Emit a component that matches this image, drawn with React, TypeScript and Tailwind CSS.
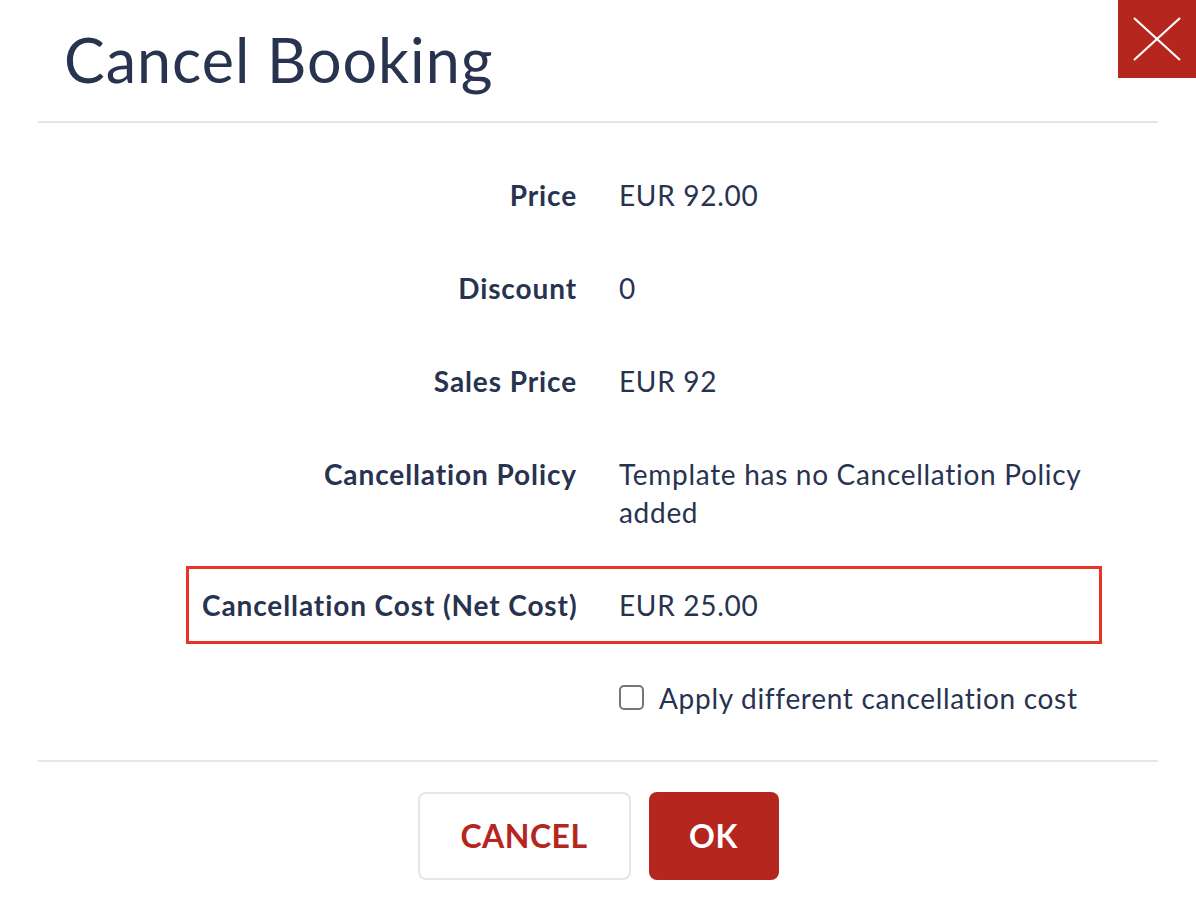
import { useState } from 'react';

const rows = [
    { label: 'Price', value: 'EUR 92.00' },
    { label: 'Discount', value: '0' },
    { label: 'Sales Price', value: 'EUR 92' },
    { label: 'Cancellation Policy', value: 'Template has no Cancellation Policy added' },
];

export default function App() {
    const [applyDifferent, setApplyDifferent] = useState(false);

    return (
        <div className="relative min-h-screen bg-white text-[#283350]" style={{ fontFamily: 'Lato, "Open Sans", sans-serif' }}>
            {/* Close button */}
            <button className="absolute right-0 top-0 flex h-[78px] w-[78px] items-center justify-center bg-[#b5261e]">
                <svg width="48" height="44" viewBox="0 0 48 44" fill="none" stroke="white" strokeWidth="2.2">
                    <line x1="1" y1="1" x2="47" y2="43" />
                    <line x1="47" y1="1" x2="1" y2="43" />
                </svg>
            </button>

            {/* Header */}
            <div className="px-[38px]">
                <h1 className="pl-[26px] pt-[24px] pb-[26px] text-[61px] leading-[71px] font-normal tracking-[1px]">Cancel Booking</h1>
                <div className="h-[2px] bg-[#e6e6e6]"></div>
            </div>

            {/* Body */}
            <div className="pt-[25px] pb-[16px] text-[28px] leading-[38px] tracking-[0.7px]">
                {rows.map((row) => (
                    <div key={row.label} className="ml-[186px] mr-[94px] flex border-[3px] border-transparent px-[13px] py-[24.5px]">
                        <div className="w-[375px] flex-none text-right font-bold tracking-[0.9px]">{row.label}</div>
                        <div className="ml-[42px] w-[475px] flex-none">{row.value}</div>
                    </div>
                ))}

                {/* Highlighted row */}
                <div className="py-[7.5px]">
                    <div className="ml-[186px] mr-[94px] flex border-[3px] border-[#e53528] px-[13px] py-[17px]">
                        <div className="w-[375px] flex-none whitespace-nowrap text-right font-bold tracking-[0.9px]">Cancellation Cost (Net Cost)</div>
                        <div className="ml-[42px] flex-1">EUR 25.00</div>
                    </div>
                </div>

                {/* Checkbox row */}
                <div className="ml-[619px] flex items-center gap-[15px] py-[27.5px]">
                    <button
                        onClick={() => setApplyDifferent(!applyDifferent)}
                        className={`h-[25px] w-[25px] flex-none rounded-[5px] border-2 border-[#767676] ${applyDifferent ? 'bg-[#b5261e]' : 'bg-white'}`}
                    ></button>
                    <span>Apply different cancellation cost</span>
                </div>
            </div>

            {/* Footer */}
            <div className="px-[38px]">
                <div className="h-[2px] bg-[#e6e6e6]"></div>
                <div className="flex justify-center gap-[18px] pt-[30px]">
                    <button className="h-[88px] w-[213px] rounded-[8px] border-2 border-[#e6e6e6] bg-white text-[32px] font-bold tracking-[0.5px] text-[#b5261e]">
                        CANCEL
                    </button>
                    <button className="h-[88px] w-[130px] rounded-[8px] bg-[#b5261e] text-[32px] font-bold tracking-[0.5px] text-white">
                        OK
                    </button>
                </div>
            </div>
        </div>
    );
}
